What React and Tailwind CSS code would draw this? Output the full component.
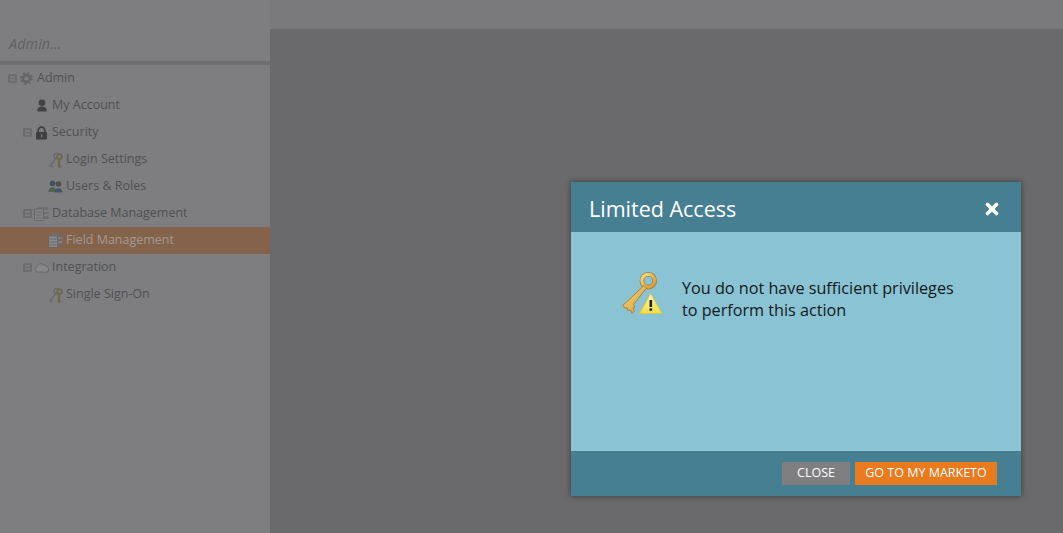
import { X } from "lucide-react";

const Toggle = () => (
  <svg width="9" height="9" viewBox="0 0 9 9" className="shrink-0">
    <rect x="0" y="0" width="9" height="9" rx="1.5" fill="#6c6c6e" />
    <rect x="2" y="2.5" width="5" height="1" fill="#8c8c8e" />
    <rect x="2" y="5.5" width="5" height="1" fill="#8c8c8e" />
  </svg>
);

const GearIcon = () => (
  <svg width="13" height="13" viewBox="0 0 14 14">
    <circle cx="7" cy="7" r="3.8" fill="none" stroke="#656567" strokeWidth="2.6" />
    <circle cx="7" cy="7" r="5.8" fill="none" stroke="#656567" strokeWidth="2.2" strokeDasharray="2.2 2.35" />
  </svg>
);

const UserIcon = () => (
  <svg width="12" height="13" viewBox="0 0 13 14">
    <circle cx="6.5" cy="4" r="3.6" fill="#434345" />
    <path d="M1.5 13.5v-2c0-2 2-3.4 5-3.4s5 1.4 5 3.4v2z" fill="#434345" />
  </svg>
);

const LockIcon = () => (
  <svg width="13" height="14" viewBox="0 0 13 14">
    <path d="M3.2 6.5V4.4a3.3 3.3 0 0 1 6.6 0v2.1" fill="none" stroke="#3f3f41" strokeWidth="1.7" />
    <rect x="1" y="6" width="11" height="7.5" rx="1" fill="#3f3f41" />
    <rect x="6" y="8.3" width="1.2" height="3" fill="#808082" />
  </svg>
);

const KeyIcon = () => (
  <svg width="15" height="16" viewBox="0 0 15 16">
    <path d="M1.5 14.5L8 6.5M3 13.5l1.500 1.500" stroke="#6a6b6d" strokeWidth="1.500" fill="none" />
    <circle cx="8.500" cy="4" r="2.600" fill="none" stroke="#68696b" strokeWidth="1.300" />
    <circle cx="11.500" cy="4.500" r="2.600" fill="#7c7866" stroke="#6a6450" strokeWidth="1.300" />
    <path d="M11 7.500V14.500h2.200" stroke="#6e664e" strokeWidth="2.200" fill="none" />
  </svg>
);

const UsersIcon = () => (
  <svg width="15" height="13" viewBox="0 0 15 13">
    <circle cx="4.500" cy="3.500" r="2.800" fill="#46505a" />
    <path d="M0.500 12c0-3 1.700-4.800 4-4.800s4 1.800 4 4.800z" fill="#4a6450" />
    <circle cx="10.500" cy="4" r="2.800" fill="#4c4e50" />
    <path d="M6.500 12.500c0-2.800 1.700-4.300 4-4.300s4 1.500 4 4.300z" fill="#46566a" />
  </svg>
);

const DbIcon = ({ light }) => (
  <svg width="15" height="15" viewBox="0 0 15 15">
    <rect x="3" y="0.500" width="8" height="13" fill="#707072" />
    <rect x="0.500" y="3" width="9" height="11.500" rx="1" fill={light ? "#8b8886" : "#868688"} stroke="#666668" />
    <rect x="10" y="1" width="4.500" height="12" fill={light ? "#6d6a68" : "#6e6e70"} />
    <path d="M10 5h4.500M10 9h4.500" stroke="#8e8e90" />
    <path d="M1.500 6h7M1.500 9h7M1.500 12h7" stroke="#6b6b6d" />
  </svg>
);

const CloudIcon = () => (
  <svg width="16" height="11" viewBox="0 0 16 11">
    <path d="M3.500 10a2.700 2.700 0 0 1-.4-5.300A3.800 3.800 0 0 1 9.700 3a3.200 3.200 0 0 1 3.400 2.200A2.500 2.500 0 0 1 12.700 10z" fill="#88888a" stroke="#69696b" />
  </svg>
);

const rows = [
  { label: "Admin", depth: 0, toggle: true, icon: <GearIcon /> },
  { label: "My Account", depth: 1, icon: <UserIcon /> },
  { label: "Security", depth: 1, toggle: true, icon: <LockIcon /> },
  { label: "Login Settings", depth: 2, icon: <KeyIcon /> },
  { label: "Users & Roles", depth: 2, icon: <UsersIcon /> },
  { label: "Database Management", depth: 1, toggle: true, icon: <DbIcon /> },
  { label: "Field Management", depth: 2, active: true, icon: <DbIcon light /> },
  { label: "Integration", depth: 1, toggle: true, icon: <CloudIcon /> },
  { label: "Single Sign-On", depth: 2, icon: <KeyIcon /> },
];

const indents = ["pl-[8px]", "pl-[23px]", "pl-[37px]"];

// big key with the warning triangle from the dialog
const KeyWarning = () => (
  <svg width="46" height="46" viewBox="0 0 46 46" className="shrink-0">
    <defs>
      <linearGradient id="gold" x1="0" y1="0" x2="1" y2="1">
        <stop offset="0" stopColor="#f7dc88" />
        <stop offset="1" stopColor="#d2952f" />
      </linearGradient>
      <linearGradient id="warn" x1="0" y1="0" x2="0" y2="1">
        <stop offset="0" stopColor="#fdf9b4" />
        <stop offset="1" stopColor="#f0dd45" />
      </linearGradient>
    </defs>
    <circle cx="28.300" cy="10.700" r="6.400" fill="none" stroke="#a8741f" strokeWidth="4.600" />
    <circle cx="28.300" cy="10.700" r="6.400" fill="none" stroke="url(#gold)" strokeWidth="3.200" />
    <path
      d="M24 15.500L5 33.500l-2 1.500 1.500 3 2.500-.5.500 3 3-.5 1.500 3.500 2.500-3-1.500-2 2-1.500-1.500-2.500L26.500 18z"
      fill="url(#gold)"
      stroke="#a8741f"
      strokeWidth="0.800"
      strokeLinejoin="round"
    />
    <path d="M30.700 23.500L42 43.500H19.500z" fill="url(#warn)" stroke="#dcc643" strokeWidth="1" strokeLinejoin="round" />
    <rect x="29.500" y="30" width="2.600" height="7" fill="#222" />
    <rect x="29.500" y="38.300" width="2.600" height="2.500" fill="#222" />
  </svg>
);

export default function App() {
  return (
    <div className="relative h-[533px] w-[1063px] overflow-hidden bg-[#6a6a6c] font-['Open_Sans',sans-serif]">
      <div className="flex h-full">
        <aside className="h-full w-[270px] bg-[#7e7e80]">
          <div className="h-[25px]" />
          <div className="flex h-[36px] items-center pl-[9px] pt-[2px] text-[14.500px] italic text-[#5f5f61]">Admin...</div>
          <div className="h-[4px] bg-[#6f6f71]" />
          <ul>
            {rows.map((row) => (
              <li
                key={row.label}
                className={`flex h-[27px] items-center ${indents[row.depth]} ${row.active ? "bg-[#84634a] text-[#a09a96]" : "text-[#505052]"}`}
              >
                <span className="flex w-[10px] shrink-0 items-center">{row.toggle && <Toggle />}</span>
                <span className="mr-[2px] flex w-[17px] shrink-0 items-center justify-center">{row.icon}</span>
                <span className="text-[12.500px]">{row.label}</span>
              </li>
            ))}
          </ul>
        </aside>
        <div className="flex-1">
          <div className="h-[29px] bg-[#7a7a7c]" />
        </div>
      </div>

      <div className="absolute left-[571px] top-[182px] flex h-[314px] w-[450px] flex-col bg-[#89c3d4] shadow-[0_0_6px_rgba(0,0,0,0.45)]">
        <div className="flex h-[50px] items-center justify-between bg-[#467e92] pl-[18px] pr-[20px] pt-[4px]">
          <span className="text-[21.500px] text-white">Limited Access</span>
          <X size={18} strokeWidth={5} className="text-white" />
        </div>
        <div className="flex flex-1 items-start pl-[49px] pt-[38px]">
          <KeyWarning />
          <p className="ml-[16px] pt-[7px] text-[16.200px] leading-[22px] text-[#14181a]">
            You do not have sufficient privileges
            <br />
            to perform this action
          </p>
        </div>
        <div className="flex h-[45px] items-center justify-end gap-[5px] bg-[#467e92] pr-[24px]">
          <button className="h-[23px] w-[68px] bg-[#7f7f81] text-[12.500px] text-white">CLOSE</button>
          <button className="h-[23px] w-[142px] bg-[#ea7a1e] text-[12.500px] text-white">GO TO MY MARKETO</button>
        </div>
      </div>
    </div>
  );
}
